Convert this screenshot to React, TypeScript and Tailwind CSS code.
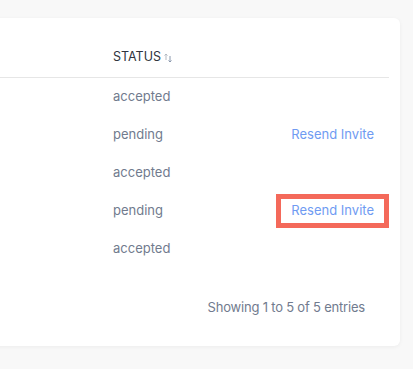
import React from "react";

const rows = [
  { status: "accepted", resend: false },
  { status: "pending", resend: true },
  { status: "accepted", resend: false },
  { status: "pending", resend: true, highlight: true },
  { status: "accepted", resend: false },
];

function SortIcon() {
  return (
    <svg width="8" height="10" viewBox="0 0 8 10" className="ml-[3px] mt-[2px]">
      <path d="M2 7V1M0.5 2.5L2 1l1.5 1.5" stroke="#b3b9c2" strokeWidth="1" fill="none" />
      <path d="M6 3v6M4.5 7.5L6 9l1.5-1.5" stroke="#8a98ad" strokeWidth="1" fill="none" />
    </svg>
  );
}

export default function App() {
  return (
    <div className="min-h-screen overflow-hidden bg-[#f8f8f8] pt-[18px] pr-[13px] font-['Inter',sans-serif]">
      <div className="ml-[-20px] h-[328px] rounded-md bg-white pl-[20px] pr-[11px] pt-[19px] shadow-[0_1px_4px_rgba(0,0,0,0.05)]">
        {/* Header */}
        <div className="flex h-[41px] items-center border-b border-[#e6e6e6]">
          <div className="w-[113px] shrink-0" />
          <div className="flex items-center text-[12.5px] text-[#2f3540]">
            STATUS
            <SortIcon />
          </div>
        </div>

        {/* Rows */}
        {rows.map((r, i) => (
          <div key={i} className="flex h-[38px] items-center text-[13px]">
            <div className="w-[113px] shrink-0" />
            <div className="flex-1 text-[#717b8e]">{r.status}</div>
            {r.resend && (
              <div className="pr-[15px] text-[#6f9bf2]">
                <span className="relative inline-block">
                  Resend Invite
                  {r.highlight && (
                    <span className="absolute -left-[15px] -right-[15px] -top-[7px] -bottom-[7px] border-[5px] border-[#f4695a]" />
                  )}
                </span>
              </div>
            )}
          </div>
        ))}

        {/* Footer */}
        <div className="flex justify-end pr-[24px] pt-[30px] text-[13px] tracking-[-0.2px] text-[#717b8e]">
          Showing 1 to 5 of 5 entries
        </div>
      </div>
    </div>
  );
}
